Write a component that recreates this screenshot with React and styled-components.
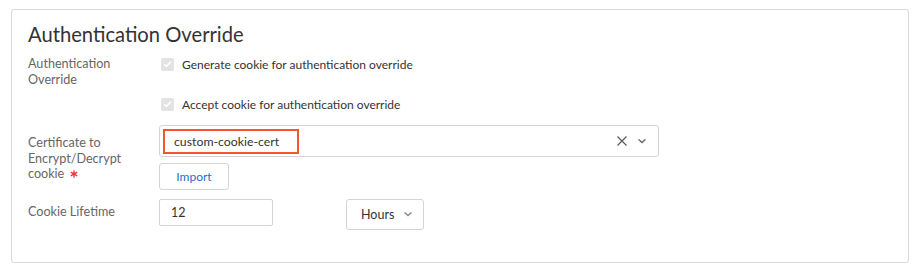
import React from "react";
import styled, { createGlobalStyle } from "styled-components";

const Global = createGlobalStyle`
  html, body { margin: 0; padding: 0; background: #fff; }
  body { font-family: Lato, "Open Sans", sans-serif; color: #333; }
  * { box-sizing: border-box; }
`;

const Page = styled.div`
  padding: 9px 11px 0 11px;
  width: 920px;
`;

const Card = styled.section`
  width: 898px;
  height: 254px;
  border: 1px solid #d9d9d9;
  border-radius: 3px;
  padding: 12px 16px 0 16px;
  display: flex;
  flex-direction: column;
`;

const Title = styled.h2`
  margin: 0;
  font-size: 20.2px;
  line-height: 24px;
  font-weight: 400;
  color: #333;
`;

const Row = styled.div`
  display: grid;
  grid-template-columns: 131px 1fr;
  margin-top: ${(p) => p.$top}px;
`;

const Label = styled.div`
  font-size: 12.6px;
  line-height: 15.5px;
  color: #666;
  padding-top: ${(p) => p.$pad || 0}px;
  padding-right: 10px;
`;

const Req = styled.span`
  display: inline-block;
  margin-left: 6px;
  vertical-align: 0px;
`;

const Checks = styled.div`
  display: flex;
  flex-direction: column;
  gap: 24px;
`;

const CheckRow = styled.label`
  display: flex;
  align-items: center;
  height: 16px;
  padding-left: 2px;
  font-size: 12px;
  color: #333;
`;

const Box = styled.span`
  width: 13px;
  height: 13px;
  border-radius: 2px;
  background: #e3e3e3;
  display: inline-flex;
  align-items: center;
  justify-content: center;
  margin-right: 8px;
`;

const Controls = styled.div`
  display: flex;
  flex-direction: column;
  align-items: flex-start;
`;

const Select = styled.div`
  width: 500px;
  height: 32px;
  border: 1px solid #d4d4d4;
  border-radius: 3px;
  padding: 3px 12px 3px 3px;
  display: flex;
  align-items: center;
`;

const Chip = styled.div`
  width: 136px;
  height: 25px;
  border: 2px solid #f05a28;
  padding-left: 9px;
  display: flex;
  align-items: center;
  font-size: 12.3px;
  color: #333;
`;

const Icons = styled.div`
  margin-left: auto;
  display: flex;
  align-items: center;
  gap: 11px;
`;

const Button = styled.button`
  margin-top: 6px;
  width: 70px;
  height: 27px;
  border: 1px solid #d4d4d4;
  border-radius: 3px;
  background: #fff;
  font-family: inherit;
  font-size: 12px;
  color: #1f6fc9;
  padding: 0;
`;

const Inline = styled.div`
  display: flex;
  align-items: flex-start;
  gap: 73px;
`;

const Input = styled.div`
  width: 114px;
  height: 27px;
  border: 1px solid #d4d4d4;
  border-radius: 2px;
  padding-left: 11px;
  display: flex;
  align-items: center;
  font-size: 12.5px;
  color: #333;
`;

const Dropdown = styled.div`
  width: 78px;
  height: 31px;
  border: 1px solid #d4d4d4;
  border-radius: 3px;
  padding-left: 14px;
  display: flex;
  align-items: center;
  gap: 10px;
  font-size: 12.5px;
  color: #333;
`;

const Check = () => (
  <svg width="9" height="8" viewBox="0 0 9 8">
    <path d="M1 4.2 L3.4 6.4 L8 1.4" fill="none" stroke="#fff" strokeWidth="1.5" />
  </svg>
);

const Star = () => (
  <svg width="8" height="8" viewBox="0 0 8 8">
    <path d="M4 0.3 V7.7 M0.8 2.15 L7.2 5.85 M0.8 5.85 L7.2 2.15" stroke="#e8343a" strokeWidth="1.3" />
  </svg>
);

const Chevron = ({ color = "#666" }) => (
  <svg width="8" height="5" viewBox="0 0 8 5">
    <path d="M0 0.8 L4 4.4 L8 0.8 L6.9 0 L4 2.6 L1.1 0 Z" fill={color} />
  </svg>
);

const Cross = () => (
  <svg width="10" height="10" viewBox="0 0 10 10">
    <path d="M0.5 0.5 L9.5 9.5 M9.5 0.5 L0.5 9.5" stroke="#555" strokeWidth="1.1" />
  </svg>
);

export default function App() {
  return (
    <Page>
      <Global />
      <Card>
        <Title>Authentication Override</Title>
        <Row $top={10}>
          <Label>Authentication<br />Override</Label>
          <Checks>
            <CheckRow><Box><Check /></Box>Generate cookie for authentication override</CheckRow>
            <CheckRow><Box><Check /></Box>Accept cookie for authentication override</CheckRow>
          </Checks>
        </Row>
        <Row $top={13}>
          <Label $pad={10}>Certificate to<br />Encrypt/Decrypt<br />cookie<Req><Star /></Req></Label>
          <Controls>
            <Select>
              <Chip>custom-cookie-cert</Chip>
              <Icons>
                <Cross />
                <Chevron />
              </Icons>
            </Select>
            <Button>Import</Button>
          </Controls>
        </Row>
        <Row $top={9}>
          <Label $pad={5}>Cookie Lifetime</Label>
          <Inline>
            <Input>12</Input>
            <Dropdown>Hours<Chevron color="#888" /></Dropdown>
          </Inline>
        </Row>
      </Card>
    </Page>
  );
}
